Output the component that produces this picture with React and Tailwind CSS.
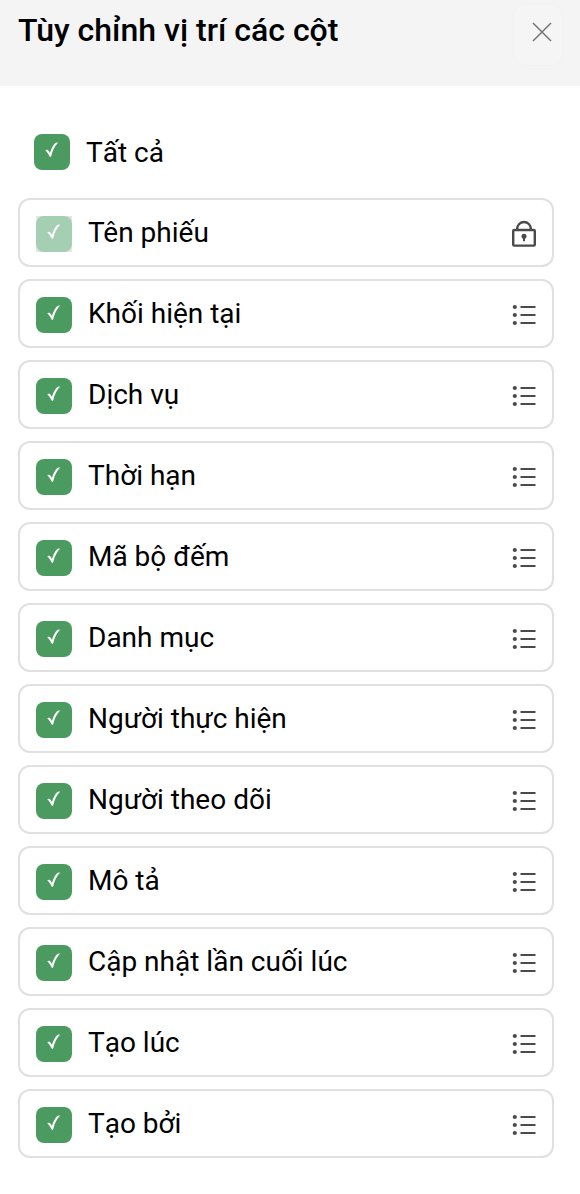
import React, { useState } from 'react'
import clsx from 'clsx'

const columns = [
  { id: 'name', label: 'Tên phiếu', locked: true },
  { id: 'block', label: 'Khối hiện tại' },
  { id: 'service', label: 'Dịch vụ' },
  { id: 'deadline', label: 'Thời hạn' },
  { id: 'counter', label: 'Mã bộ đếm' },
  { id: 'category', label: 'Danh mục' },
  { id: 'assignee', label: 'Người thực hiện' },
  { id: 'follower', label: 'Người theo dõi' },
  { id: 'description', label: 'Mô tả' },
  { id: 'updatedAt', label: 'Cập nhật lần cuối lúc' },
  { id: 'createdAt', label: 'Tạo lúc' },
  { id: 'createdBy', label: 'Tạo bởi' },
]

function Checkbox({ checked, disabled, onClick }) {
  return (
    <span className={clsx('block size-9 shrink-0', disabled && 'bg-[#e4e4e4]')}>
      <button
        type="button"
        role="checkbox"
        aria-checked={checked}
        disabled={disabled}
        onClick={onClick}
        className={clsx(
          'block size-9 rounded-lg',
          disabled ? 'bg-[#a5cfb2]' : checked ? 'bg-[#4b9b60]' : 'bg-gray-200'
        )}
      >
        {checked && (
          <svg viewBox="0 0 36 36" className="size-9" fill="#fff">
            <path d="M11.3 16.4c.6-.7 1.800-1 2.500-.4.900.7 1.500 1.700 2.100 2.900 1.500-4.300 3.200-7.800 5.400-9.800.700-.5 1.800-.7 2.700-.4-3.300 3.300-5.400 7.700-6.700 13.400-.2.800-1.300 1.100-1.700.4-1.200-2.400-2.200-4.800-4.300-6.100z" />
          </svg>
        )}
      </button>
    </span>
  )
}

function LockIcon() {
  return (
    <svg viewBox="0 0 28 28" className="size-7 shrink-0" fill="none" stroke="#4a4a4a" strokeWidth="2.4">
      <rect x="3.2" y="10" width="21.6" height="15.6" rx="1" />
      <path d="M7.2 10V8.800a6.800 6.800 0 0 1 13.600 0V10" />
      <path d="M14 17.500v3.800" strokeWidth="2" />
      <circle cx="14" cy="16.200" r="2.500" fill="#4a4a4a" stroke="none" />
    </svg>
  )
}

function ListIcon() {
  return (
    <svg viewBox="0 0 28 28" className="size-7 shrink-0" fill="#4a4a4a">
      <circle cx="4.8" cy="6" r="2.1" />
      <circle cx="4.8" cy="14" r="2.1" />
      <circle cx="4.8" cy="22" r="2.1" />
      <path d="M10.500 5h15v2h-15zM10.500 13h15v2h-15zM10.500 21h15v2h-15z" />
    </svg>
  )
}

export default function App() {
  const [selected, setSelected] = useState(columns.map((c) => c.id))
  const allSelected = selected.length === columns.length

  const toggle = (id) => {
    setSelected((prev) => (prev.includes(id) ? prev.filter((x) => x !== id) : [...prev, id]))
  }

  const toggleAll = () => {
    setSelected(allSelected ? ['name'] : columns.map((c) => c.id))
  }

  return (
    <div className="h-[1194px] w-[580px] overflow-hidden bg-white font-[Roboto,sans-serif] text-[28px] leading-9 text-black">
      <header className="flex h-[86px] items-start justify-between bg-[#f4f4f4] pr-[17px] pl-[18px]">
        <h2 className="pt-2.5 text-[32px] leading-10 font-medium">Tùy chỉnh vị trí các cột</h2>
        <button
          type="button"
          aria-label="Đóng"
          className="mt-1 flex h-[62px] w-[50px] justify-center rounded-xl border border-[#f2f2f2] bg-[#f5f5f5] pt-[17px] pl-2"
        >
          <svg viewBox="0 0 20 20" className="size-5" stroke="#747474" strokeWidth="1.5">
            <path d="M1 1l18 18M19 1L1 19" />
          </svg>
        </button>
      </header>

      <div className="mt-12 flex h-9 items-center gap-4 pl-[34px]">
        <Checkbox checked={allSelected} onClick={toggleAll} />
        <span className="pt-0.5 [font-kerning:none]">Tất cả</span>
      </div>

      {/* Column list */}
      <ul className="mt-7 mr-[26px] ml-[18px] flex flex-col gap-3">
        {columns.map((col) => (
          <li
            key={col.id}
            className="flex h-[69px] items-start rounded-xl border-2 border-[#e0e0e0] pt-4 pr-3.5 pl-4"
          >
            <Checkbox
              checked={selected.includes(col.id)}
              disabled={col.locked}
              onClick={() => toggle(col.id)}
            />
            <span className={clsx('-mt-px ml-4 flex-1', !col.locked && '[font-kerning:none]')}>
              {col.label}
            </span>
            <span className="pt-1">{col.locked ? <LockIcon /> : <ListIcon />}</span>
          </li>
        ))}
      </ul>
    </div>
  )
}
